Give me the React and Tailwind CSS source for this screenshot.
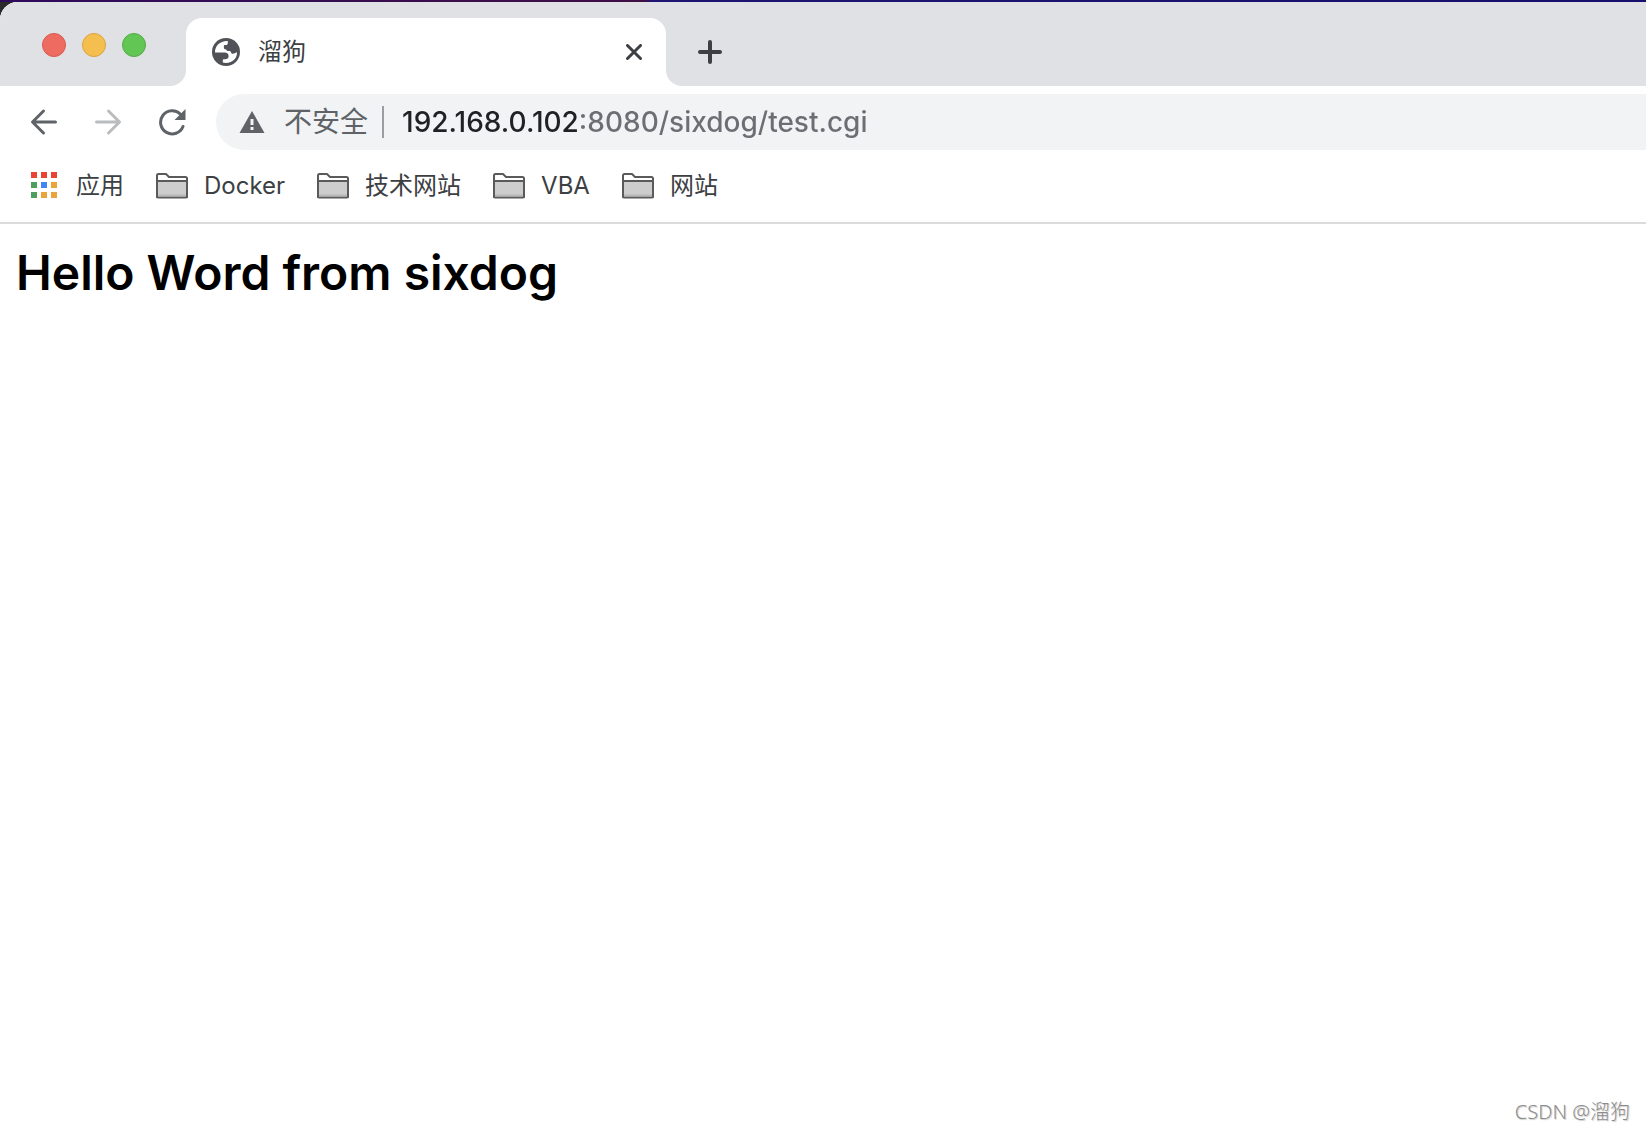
const bookmarks = ["Docker", "技术网站", "VBA", "网站"];

const appDots = [
  "#ea4335", "#ea4335", "#ea4335",
  "#4d9e5f", "#4285f4", "#e8a53a",
  "#4d9e5f", "#e8a53a", "#e8a53a",
];

const GlobeIcon = () => (
  <svg className="size-7 shrink-0" viewBox="0 0 28 28" aria-hidden="true">
    <circle cx="14" cy="14" r="14" fill="#505257" />
    <path
      fill="#fff"
      d="M3 14.500C2.800 8 8 2.800 15.800 3.100V5c0 1.400-.8 2.100-2 2.100h-.6c-.8 0-1.300.5-1.300 1.300v1.300c0 .9.600 1.500 1.500 1.500.5 0 .8.300 1 .9.200.5.600.8 1.200.8h2.200c.6 0 .9.400 1 1 .3 1.200.9 1.800 2 1.800 1.500 0 2.500-.7 4.200-1.400C25.200 21 19.500 26.200 10.800 24.600V22c0-.5.300-.8.8-.8h1.600c2 0 3.400-1 3.400-2.900 0-2.600-1.400-3.800-4-3.800z"
    />
  </svg>
);

const BackIcon = () => (
  <svg className="size-7" viewBox="0 0 28 28" fill="none" stroke="currentColor" strokeWidth="3" strokeLinecap="round" strokeLinejoin="round" aria-hidden="true">
    <path d="M25.500 14H3M13.500 3 2.500 14l11 11" />
  </svg>
);

const ForwardIcon = () => (
  <svg className="size-7" viewBox="0 0 28 28" fill="none" stroke="currentColor" strokeWidth="3" strokeLinecap="round" strokeLinejoin="round" aria-hidden="true">
    <path d="M2.500 14H25M14.500 3l11 11-11 11" />
  </svg>
);

const ReloadIcon = () => (
  <svg className="size-7" viewBox="0 0 28 28" aria-hidden="true">
    <path d="M25 18.500A11.600 11.600 0 1 1 22.500 6.200" fill="none" stroke="currentColor" strokeWidth="3" strokeLinecap="round" />
    <path d="M27.500 1v11h-11z" fill="currentColor" />
  </svg>
);

const WarningIcon = () => (
  <svg className="h-6 w-7" viewBox="0 0 28 24" aria-hidden="true">
    <path d="M14 1 26.500 23h-25z" fill="currentColor" />
    <path d="M12.500 9h3v6h-3zM12.500 17h3v3h-3z" fill="#f1f3f4" />
  </svg>
);

const FolderIcon = () => (
  <svg className="h-7 w-8" viewBox="0 0 32 28" strokeLinejoin="round" aria-hidden="true">
    <path d="M1 25V3.500a1.500 1.500 0 0 1 1.500-1.500H10l3 3h16.500A1.500 1.500 0 0 1 31 6.500V25z" fill="#fff" stroke="#5a5a5a" strokeWidth="2" />
    <path d="M1 9h30v15.500a1 1 0 0 1-1 1H2a1 1 0 0 1-1-1z" fill="#cdcdcd" stroke="#5a5a5a" strokeWidth="2" />
    <path d="M2 23.500h28" stroke="#b8b8b8" strokeWidth="2" />
  </svg>
);

const AppsIcon = () => (
  <svg className="size-7" viewBox="0 0 28 28" aria-hidden="true">
    {appDots.map((fill, i) => (
      <rect key={i} x={1 + (i % 3) * 10} y={Math.floor(i / 3) * 10} width="6" height="6" fill={fill} />
    ))}
  </svg>
);

const TabStrip = () => (
  <header className="flex h-21 bg-white">
    <div className="flex w-[186px] shrink-0 items-center gap-4 rounded-br-2xl bg-[#dfe1e5] pt-0.5 pl-[42px]">
      <button type="button" aria-label="关闭" className="size-6 rounded-full border border-[#d9584d] bg-[#ed6b60]" />
      <button type="button" aria-label="最小化" className="size-6 rounded-full border border-[#dca13c] bg-[#f5bf4f]" />
      <button type="button" aria-label="全屏" className="size-6 rounded-full border border-[#52ab43] bg-[#62c655]" />
    </div>
    <div className="flex w-[480px] shrink-0 bg-[#dfe1e5] pt-4">
      <div className="flex flex-1 items-center gap-[18px] rounded-t-2xl bg-white pr-5 pl-[26px]">
        <GlobeIcon />
        <span className="flex-1 text-2xl">溜狗</span>
        <button type="button" aria-label="关闭标签页" className="p-1">
          <svg className="size-4" viewBox="0 0 16 16" stroke="currentColor" strokeWidth="3" strokeLinecap="round" aria-hidden="true">
            <path d="M1.500 1.500l13 13M14.500 1.500l-13 13" />
          </svg>
        </button>
      </div>
    </div>
    <div className="flex flex-1 items-center rounded-bl-2xl bg-[#dfe1e5] pt-4 pl-8">
      <button type="button" aria-label="新标签页">
        <svg className="size-6" viewBox="0 0 24 24" stroke="currentColor" strokeWidth="4" strokeLinecap="round" aria-hidden="true">
          <path d="M12 2v20M2 12h20" />
        </svg>
      </button>
    </div>
  </header>
);

const Toolbar = () => (
  <div className="flex items-center bg-white pt-2 pl-[30px] text-[#5f6368]">
    <nav className="flex shrink-0 gap-9">
      <button type="button" aria-label="后退"><BackIcon /></button>
      <button type="button" aria-label="前进" className="text-[#babcbe]"><ForwardIcon /></button>
      <button type="button" aria-label="重新加载"><ReloadIcon /></button>
    </nav>
    <div className="ml-[30px] flex h-14 flex-1 items-center rounded-l-full bg-[#f1f3f4] pl-[22px] text-[28px]">
      <button type="button" className="flex shrink-0 items-center gap-[18px]">
        <WarningIcon />
        <span>不安全</span>
      </button>
      <span className="ml-3.5 h-8 w-0.5 shrink-0 bg-[#9a9da1]" />
      {/* host part is darker than the port and path */}
      <input
        type="text"
        aria-label="地址和搜索栏"
        defaultValue="192.168.0.102:8080/sixdog/test.cgi"
        className="ml-[18px] min-w-0 flex-1 bg-[linear-gradient(to_right,#202124_177px,#6b6e72_177px)] bg-clip-text font-medium text-transparent caret-black outline-none"
      />
    </div>
  </div>
);

const BookmarksBar = () => (
  <nav className="flex items-center gap-8 border-b-2 border-[#dadbdc] bg-white px-[30px] py-[18px] text-2xl leading-9">
    <a href="#apps" className="flex items-center gap-[18px]">
      <AppsIcon />
      应用
    </a>
    {bookmarks.map((name) => (
      <a key={name} href={`#${name}`} className="flex items-center gap-4">
        <FolderIcon />
        {name}
      </a>
    ))}
  </nav>
);

export default function App() {
  return (
    <div className="flex min-h-screen flex-col bg-[#2b2b2b] font-[Inter,'Noto_Sans_CJK_SC',sans-serif] text-[#3c4043]">
      <div className="h-0.5 bg-[linear-gradient(to_right,#2f0a5c,#3f0f45_648px,#1d1570_648px,#17106b)]" />
      <div className="flex flex-1 flex-col overflow-hidden rounded-tl-[18px] bg-white">
        <TabStrip />
        <Toolbar />
        <BookmarksBar />
        <main className="flex flex-1 flex-col justify-between px-4 pt-[21px]">
          <h2 className="text-5xl leading-14 font-semibold text-black">Hello Word from sixdog</h2>
          <p className="self-end pb-1 font-['Noto_Sans','Noto_Sans_CJK_SC',sans-serif] text-xl font-light text-[#8c8c8c] [text-shadow:1px_1px_1px_#ccc]">
            CSDN @溜狗
          </p>
        </main>
      </div>
    </div>
  );
}
